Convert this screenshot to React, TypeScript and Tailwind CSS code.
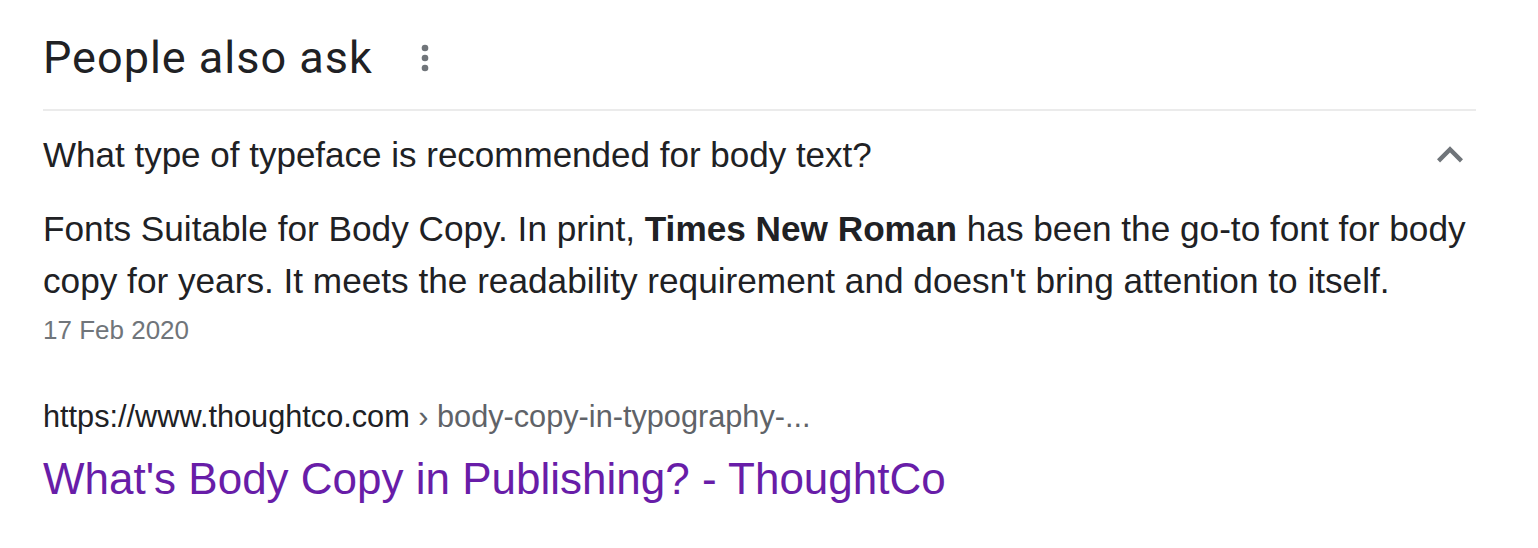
import React from "react";

const MoreVert = () => (
  <svg viewBox="0 0 24 24" className="w-10 h-10 fill-[#70757a]">
    <circle cx="12" cy="6" r="2" />
    <circle cx="12" cy="12" r="2" />
    <circle cx="12" cy="18" r="2" />
  </svg>
);

const ExpandLess = () => (
  <svg viewBox="0 0 24 24" className="w-[52px] h-[52px] fill-[#70757a]">
    <path d="M12 8l-6 6 1.41 1.41L12 10.83l4.59 4.58L18 14z" />
  </svg>
);

export default function App() {
  return (
    <div className="w-[1538px] h-[548px] bg-white pl-[43px] font-['Liberation_Sans',Arial,sans-serif] text-[#202124]">
      <div className="w-[1433px]">
        <div className="flex items-center pt-[30px] pb-[23px]">
          <h2 className="font-['Roboto',sans-serif] text-[45px] leading-[56px] tracking-[1px] font-normal">
            People also ask
          </h2>
          <div className="ml-[32px]">
            <MoreVert />
          </div>
        </div>
        <div className="h-[2px] bg-[#ebebeb]" />

        <div className="flex items-center justify-between pt-[18px]">
          <span className="text-[35px] leading-[48px]">
            What type of typeface is recommended for body text?
          </span>
          <ExpandLess />
        </div>

        <p className="text-[35.2px] leading-[52px] mt-[22px]">
          Fonts Suitable for Body Copy. In print, <b>Times New Roman</b> has
          been the go-to font for body copy for years. It meets the readability
          requirement and doesn't bring attention to itself.
        </p>
        <div className="text-[26px] leading-[32px] mt-[7px] text-[#70757a]">
          17 Feb 2020
        </div>

        <div className="text-[30.7px] leading-[40px] mt-[51px] whitespace-nowrap">
          <span>https://www.thoughtco.com</span>
          <span className="text-[#5f6368]"> › body-copy-in-typography-...</span>
        </div>
        <a className="block text-[44px] leading-[56px] mt-[14px] text-[#681da8]">
          What's Body Copy in Publishing? - ThoughtCo
        </a>
      </div>
    </div>
  );
}
